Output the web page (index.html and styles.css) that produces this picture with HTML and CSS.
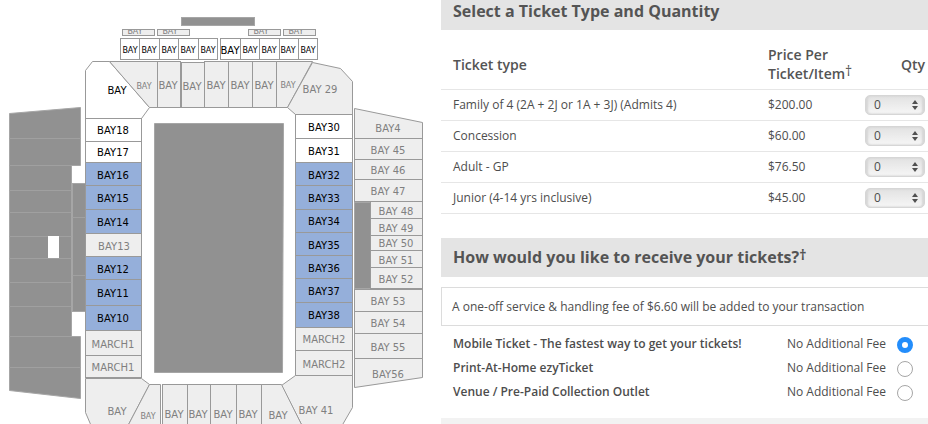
FILE: index.html
```html
<!DOCTYPE html>
<html lang="en">
<head>
    <meta charset="UTF-8">
    <meta name="viewport" content="width=device-width, initial-scale=1.0">
    <title>Select Tickets</title>
    <link rel="stylesheet" href="styles.css">
</head>
<body>
    <main class="page">
        <section class="map">
            <svg class="venue" viewBox="0 0 441 424" role="img" aria-label="Seating map">
                <defs>
                    <clipPath id="boxLabels">
                        <rect x="120" y="30" width="200" height="5"/>
                    </clipPath>
                </defs>
                <g transform="translate(0.5 0.5)">
                    <!-- scoreboard and top boxes -->
                    <rect class="solid" x="181" y="17" width="73" height="8"/>
                    <g class="off">
                        <rect x="122" y="29" width="32" height="6"/>
                        <rect x="157" y="29" width="32" height="6"/>
                        <rect x="248" y="29" width="32" height="6"/>
                        <rect x="283" y="29" width="32" height="6"/>
                    </g>
                    <g class="open">
                        <rect x="120" y="38" width="19" height="21"/>
                        <rect x="139" y="38" width="20" height="21"/>
                        <rect x="159" y="38" width="19" height="21"/>
                        <rect x="178" y="38" width="20" height="21"/>
                        <rect x="198" y="38" width="19" height="21"/>
                        <rect x="220" y="38" width="20" height="21"/>
                        <rect x="240" y="38" width="19" height="21"/>
                        <rect x="259" y="38" width="20" height="21"/>
                        <rect x="279" y="38" width="19" height="21"/>
                        <rect x="298" y="38" width="19" height="21"/>
                    </g>

                    <!-- north end -->
                    <polygon class="open" points="92,61 109,61 149,107 141,118 85,118 85,70"/>
                    <g class="off">
                        <polygon points="109,61 157,61 157,107 149,107"/>
                        <rect x="157" y="61" width="23" height="46"/>
                        <rect x="181" y="62" width="23" height="45"/>
                        <rect x="204" y="61" width="24" height="46"/>
                        <rect x="228" y="61" width="24" height="46"/>
                        <rect x="252" y="61" width="24" height="46"/>
                        <polygon points="276,61 312,61 287,107 276,107"/>
                        <polygon points="312,62 340,68 352,81 352,114 295,114 287,107"/>
                    </g>

                    <!-- west outer stand -->
                    <polygon class="solid" points="9,113 80,107 80,165 71,165 71,336 80,336 80,398 9,390"/>
                    <rect class="solid" x="72" y="183" width="13" height="128"/>
                    <path class="seam" d="M9 138H80M9 165H71M9 190H71M9 212H71M9 236H71M9 258H71M9 282H71M9 306H71M9 336H71M9 367H80M72 217H85M72 275H85"/>
                    <rect class="gap" x="48" y="236" width="10" height="21"/>

                    <!-- field -->
                    <polygon class="solid" points="154,123 283,123 282,372 154,372"/>

                    <!-- west stand -->
                    <g class="open">
                        <rect x="85" y="118" width="56" height="23"/>
                        <rect x="85" y="141" width="56" height="21"/>
                    </g>
                    <g class="avail">
                        <rect x="85" y="162" width="56" height="23"/>
                        <rect x="85" y="185" width="56" height="24"/>
                        <rect x="85" y="209" width="56" height="24"/>
                        <rect x="85" y="256" width="56" height="23"/>
                        <rect x="85" y="279" width="56" height="26"/>
                        <rect x="85" y="305" width="56" height="25"/>
                    </g>
                    <g class="off">
                        <rect x="85" y="233" width="56" height="23"/>
                        <rect x="85" y="330" width="56" height="25"/>
                        <rect x="85" y="355" width="56" height="22"/>
                        <polygon points="85,378 141,378 149,384 127,426 91,426 85,412"/>
                    </g>

                    <!-- east stand -->
                    <g class="open">
                        <rect x="295" y="114" width="57" height="24"/>
                        <rect x="295" y="138" width="57" height="24"/>
                    </g>
                    <g class="avail">
                        <rect x="295" y="162" width="57" height="23"/>
                        <rect x="295" y="185" width="57" height="24"/>
                        <rect x="295" y="209" width="57" height="23"/>
                        <rect x="295" y="232" width="57" height="23"/>
                        <rect x="295" y="255" width="57" height="23"/>
                        <rect x="295" y="278" width="57" height="24"/>
                        <rect x="295" y="302" width="57" height="25"/>
                    </g>
                    <g class="off">
                        <rect x="295" y="327" width="57" height="23"/>
                        <rect x="295" y="350" width="57" height="25"/>
                        <polygon points="295,375 352,375 352,407 341,426 302,426 281,385"/>
                    </g>

                    <!-- east outer stand -->
                    <rect class="solid" x="354" y="202" width="16" height="86"/>
                    <g class="off">
                        <polygon points="354,108 422,122 422,138 354,138"/>
                        <rect x="354" y="138" width="68" height="21"/>
                        <rect x="354" y="159" width="68" height="20"/>
                        <rect x="354" y="179" width="68" height="22"/>
                        <rect x="370" y="201" width="52" height="17"/>
                        <rect x="370" y="218" width="52" height="17"/>
                        <rect x="370" y="235" width="52" height="15"/>
                        <rect x="370" y="250" width="52" height="17"/>
                        <rect x="370" y="267" width="52" height="21"/>
                        <rect x="354" y="289" width="68" height="22"/>
                        <rect x="354" y="311" width="68" height="22"/>
                        <rect x="354" y="333" width="68" height="25"/>
                        <polygon points="354,358 422,358 422,377 354,387"/>
                    </g>

                    <!-- south end -->
                    <g class="off">
                        <polygon points="149,384 160,384 160,426 127,426"/>
                        <rect x="162" y="384" width="25" height="42"/>
                        <rect x="187" y="384" width="23" height="42"/>
                        <rect x="210" y="384" width="26" height="42"/>
                        <rect x="236" y="384" width="25" height="42"/>
                        <polygon points="261,384 281,384 302,426 261,426"/>
                    </g>
                </g>

                <g class="label small" clip-path="url(#boxLabels)">
                    <text x="135" y="34">BAY</text>
                    <text x="170" y="34">BAY</text>
                    <text x="261" y="34">BAY</text>
                    <text x="296" y="34">BAY</text>
                </g>
                <g class="label small dark">
                    <text x="130" y="53">BAY</text>
                    <text x="149" y="53">BAY</text>
                    <text x="169" y="53">BAY</text>
                    <text x="188" y="53">BAY</text>
                    <text x="208" y="53">BAY</text>
                    <text x="250" y="53">BAY</text>
                    <text x="269" y="53">BAY</text>
                    <text x="288" y="53">BAY</text>
                    <text x="308" y="53">BAY</text>
                </g>
                <g class="label small">
                    <text x="144" y="89">BAY</text>
                    <text x="288" y="88">BAY</text>
                    <text x="148" y="419">BAY</text>
                </g>
                <g class="label dark">
                    <text x="230" y="54">BAY</text>
                    <text x="117" y="94">BAY</text>
                    <text x="113" y="134">BAY18</text>
                    <text x="113" y="156">BAY17</text>
                    <text x="113" y="179">BAY16</text>
                    <text x="113" y="202">BAY15</text>
                    <text x="113" y="226">BAY14</text>
                    <text x="113" y="273">BAY12</text>
                    <text x="113" y="297">BAY11</text>
                    <text x="113" y="322">BAY10</text>
                    <text x="324" y="131">BAY30</text>
                    <text x="324" y="155">BAY31</text>
                    <text x="324" y="179">BAY32</text>
                    <text x="324" y="202">BAY33</text>
                    <text x="324" y="225">BAY34</text>
                    <text x="324" y="249">BAY35</text>
                    <text x="324" y="272">BAY36</text>
                    <text x="324" y="295">BAY37</text>
                    <text x="324" y="319">BAY38</text>
                </g>
                <g class="label">
                    <text x="168" y="89">BAY</text>
                    <text x="192" y="90">BAY</text>
                    <text x="216" y="89">BAY</text>
                    <text x="240" y="89">BAY</text>
                    <text x="264" y="89">BAY</text>
                    <text x="320" y="93">BAY 29</text>
                    <text x="114" y="250">BAY13</text>
                    <text x="113" y="348">MARCH1</text>
                    <text x="113" y="371">MARCH1</text>
                    <text x="117" y="415">BAY</text>
                    <text x="324" y="343">MARCH2</text>
                    <text x="324" y="368">MARCH2</text>
                    <text x="316" y="414">BAY 41</text>
                    <text x="388" y="132">BAY4</text>
                    <text x="388" y="154">BAY 45</text>
                    <text x="388" y="174">BAY 46</text>
                    <text x="388" y="195">BAY 47</text>
                    <text x="396" y="215">BAY 48</text>
                    <text x="396" y="232">BAY 49</text>
                    <text x="396" y="247">BAY 50</text>
                    <text x="396" y="264">BAY 51</text>
                    <text x="396" y="283">BAY 52</text>
                    <text x="388" y="305">BAY 53</text>
                    <text x="388" y="327">BAY 54</text>
                    <text x="388" y="351">BAY 55</text>
                    <text x="388" y="378">BAY56</text>
                    <text x="174" y="418">BAY</text>
                    <text x="198" y="418">BAY</text>
                    <text x="223" y="418">BAY</text>
                    <text x="248" y="418">BAY</text>
                    <text x="278" y="419">BAY</text>
                </g>
            </svg>
        </section>

        <form class="order">
            <h2 class="bar bar-first">Select a Ticket Type and Quantity</h2>
            <table class="tickets">
                <thead>
                    <tr>
                        <th class="type">Ticket type</th>
                        <th class="price">Price Per Ticket/Item<sup>†</sup></th>
                        <th class="qty">Qty</th>
                    </tr>
                </thead>
                <tbody>
                    <tr>
                        <td><label for="qtyFamily">Family of 4 (2A + 2J or 1A + 3J) (Admits 4)</label></td>
                        <td>$200.00</td>
                        <td class="qty"><select id="qtyFamily" name="qtyFamily"><option>0</option><option>1</option><option>2</option></select></td>
                    </tr>
                    <tr>
                        <td><label for="qtyConcession">Concession</label></td>
                        <td>$60.00</td>
                        <td class="qty"><select id="qtyConcession" name="qtyConcession"><option>0</option><option>1</option><option>2</option></select></td>
                    </tr>
                    <tr>
                        <td><label for="qtyAdult">Adult - GP</label></td>
                        <td>$76.50</td>
                        <td class="qty"><select id="qtyAdult" name="qtyAdult"><option>0</option><option>1</option><option>2</option></select></td>
                    </tr>
                    <tr>
                        <td><label for="qtyJunior">Junior (4-14 yrs inclusive)</label></td>
                        <td>$45.00</td>
                        <td class="qty"><select id="qtyJunior" name="qtyJunior"><option>0</option><option>1</option><option>2</option></select></td>
                    </tr>
                </tbody>
            </table>

            <h2 class="bar">How would you like to receive your tickets?<sup>†</sup></h2>
            <p class="notice">A one-off service &amp; handling fee of $6.60 will be added to your transaction</p>
            <div class="delivery">
                <div class="option">
                    <label for="mobile">Mobile Ticket - The fastest way to get your tickets!</label>
                    <span>No Additional Fee</span>
                    <input type="radio" id="mobile" name="delivery" checked>
                </div>
                <div class="option">
                    <label for="print">Print-At-Home ezyTicket</label>
                    <span>No Additional Fee</span>
                    <input type="radio" id="print" name="delivery">
                </div>
                <div class="option">
                    <label for="venue">Venue / Pre-Paid Collection Outlet</label>
                    <span>No Additional Fee</span>
                    <input type="radio" id="venue" name="delivery">
                </div>
            </div>
            <div class="footer-bar"></div>
        </form>
    </main>
</body>
</html>
```
FILE: styles.css
```css
* { box-sizing: border-box; }
body { margin: 0; background: #fff; color: #4d4d4d; font-family: "Open Sans", "Noto Sans", sans-serif; font-size: 12px; line-height: 18px; }
.page { display: grid; grid-template-columns: 441fr 487fr; align-items: start; }

/* seating map */
.venue { display: block; width: 100%; height: auto; }
.open { fill: #fff; stroke: #999; }
.off { fill: #eee; stroke: #999; }
.avail { fill: #95afda; stroke: #999; }
.solid { fill: #919191; stroke: #a6a6a6; }
.seam { fill: none; stroke: #a0a0a0; }
.gap { fill: #fff; stroke: #fff; }
.label { fill: #808080; font-family: "DejaVu Sans", Verdana, sans-serif; font-size: 10px; text-anchor: middle; }
.dark { fill: #000; }
.small { font-size: 8px; }

/* headings */
.bar { margin: 0; padding: 8px 12px; background: #e4e4e4; color: #545454; font-size: 16px; line-height: 23px; font-weight: 700; }
.bar-first { padding-top: 0; padding-bottom: 7px; }
sup { font-size: 14px; line-height: 0; vertical-align: 3px; }

/* tickets */
.tickets { width: 100%; margin-bottom: 24px; border-collapse: collapse; table-layout: fixed; }
.tickets th, .tickets td { padding: 0 0 0 12px; border-bottom: 1px solid #e6e6e6; text-align: left; vertical-align: middle; }
.tickets th { height: 59px; padding-top: 10px; font-size: 14px; line-height: 19px; font-weight: 600; color: #545454; }
.tickets td { height: 31px; }
.tickets .price { width: 96px; padding-left: 0; }
.tickets td:nth-child(2) { padding-left: 0; }
.tickets .qty { width: 64px; padding: 0 3px 0 0; text-align: right; }
.tickets th.qty { width: 64px; padding-top: 10px; }
.tickets sup { font-weight: 400; }
select { display: block; width: 60px; height: 20px; margin-left: auto; padding: 0 8px; border: 1px solid #d6d6d6; border-radius: 5px; appearance: none; color: #4d4d4d; font: inherit; line-height: 18px; box-shadow: inset 2px 0 2px #d6d6d6, inset -2px 0 2px #d6d6d6; background: url("data:image/svg+xml,%3Csvg xmlns='http://www.w3.org/2000/svg' width='6' height='12'%3E%3Cpath d='M3 1L6 5H0zM3 11L0 7H6z' fill='%23505050'/%3E%3C/svg%3E") no-repeat right 6px center, linear-gradient(#e2e2e2, #f6f6f6); }

/* delivery */
.notice { margin: 10px 0 0; padding: 10px; border: 1px solid #dcdcdc; border-right: none; line-height: 17px; }
.delivery { padding: 6px 15px 14px 12px; }
.option { display: flex; align-items: center; height: 24px; }
.option label { flex: 1; font-weight: 600; }
.option span { margin-right: 11px; }
input[type="radio"] { appearance: none; width: 16px; height: 16px; margin: 3px 0 0; border: 1px solid #a6a6a6; border-radius: 50%; background: #fff; }
input[type="radio"]:checked { border: 5px solid #238dfb; }
.footer-bar { height: 7px; background: #f2f2f2; }
```
